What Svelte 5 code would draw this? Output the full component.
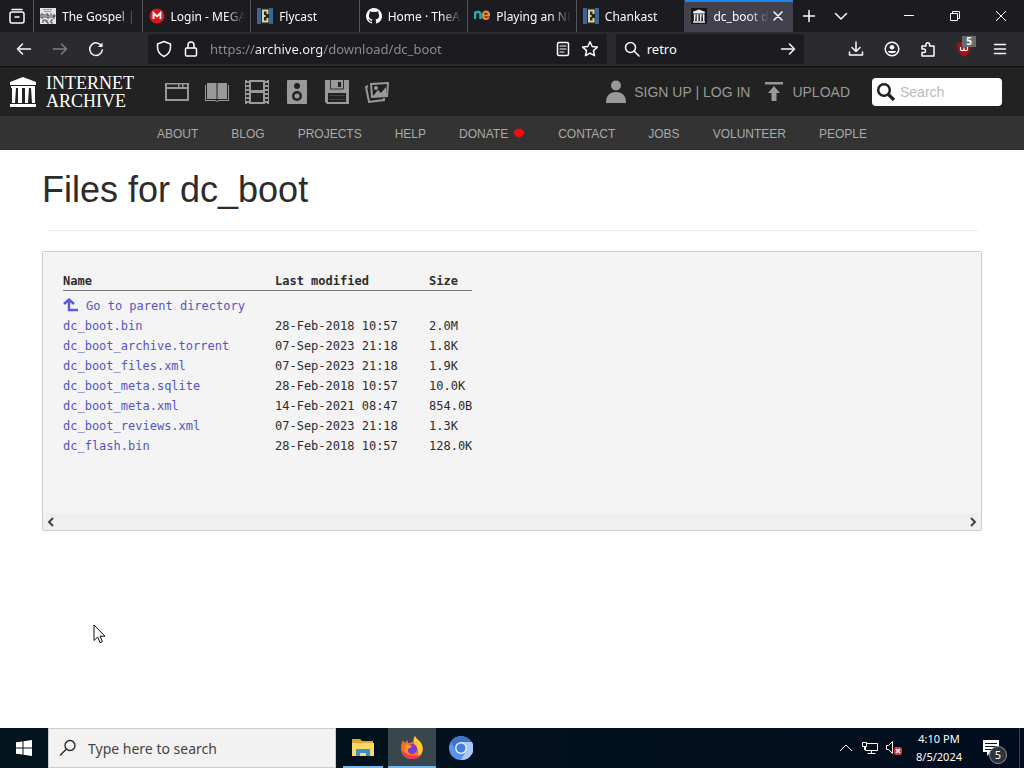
<script lang="ts">
	type Tab = { title: string; icon: string; active?: boolean };
	type Entry = { name: string; modified: string; size: string };

	const tabs: Tab[] = [
		{ title: 'The Gospel | Bible', icon: 'bible' },
		{ title: 'Login - MEGA', icon: 'mega' },
		{ title: 'Flycast', icon: 'emu' },
		{ title: 'Home · TheArchive', icon: 'github' },
		{ title: 'Playing an NES', icon: 'ne' },
		{ title: 'Chankast', icon: 'emu' },
		{ title: 'dc_boot directory', icon: 'archive', active: true }
	];

	const media = ['web', 'texts', 'video', 'audio', 'software', 'images'];

	const links = [
		'About',
		'Blog',
		'Projects',
		'Help',
		'Donate',
		'Contact',
		'Jobs',
		'Volunteer',
		'People'
	];

	const files: Entry[] = [
		{ name: 'dc_boot.bin', modified: '28-Feb-2018 10:57', size: '2.0M' },
		{ name: 'dc_boot_archive.torrent', modified: '07-Sep-2023 21:18', size: '1.8K' },
		{ name: 'dc_boot_files.xml', modified: '07-Sep-2023 21:18', size: '1.9K' },
		{ name: 'dc_boot_meta.sqlite', modified: '28-Feb-2018 10:57', size: '10.0K' },
		{ name: 'dc_boot_meta.xml', modified: '14-Feb-2021 08:47', size: '854.0B' },
		{ name: 'dc_boot_reviews.xml', modified: '07-Sep-2023 21:18', size: '1.3K' },
		{ name: 'dc_flash.bin', modified: '28-Feb-2018 10:57', size: '128.0K' }
	];

	let url = $state('https://archive.org/download/dc_boot');
	let engineQuery = $state('retro');
	let archiveQuery = $state('');
	let taskQuery = $state('');
</script>

{#snippet temple()}
	<path d="M1 6 14 1l13 5v3H1zM2 10h24v2H2z" />
	<path d="M3 12h4l-1 15H3zM9 12h4v15H9zM16 12h4l-1 15h-3zM22 12h4v15h-3zM1 28h26v3H1z" />
{/snippet}

{#snippet favicon(name: string)}
	<svg width="16" height="16" viewBox="0 0 16 16" aria-hidden="true">
		{#if name === 'bible'}
			<rect width="16" height="16" fill="#e4e4e4" />
			<path d="M3 1.500h9M4 3.500h7" stroke="#999" />
			<path
				d="M1 6v4M1 6h2v4H1M5 6v4M7 5v5h2V7H7M11 5v5M13 10V7h2v1.500h-2M13 10h2"
				fill="none"
				stroke="#444"
			/>
			<path d="M3 12v3M3 12h3v2M7 12v3h2M11 12h2M11 12v3h2" fill="none" stroke="#444" />
		{:else if name === 'mega'}
			<circle cx="8" cy="8" r="7.500" fill="#d9161d" />
			<path d="M4.500 11V5L8 8.500 11.500 5v6" fill="none" stroke="#fff" stroke-width="1.800" />
		{:else if name === 'emu'}
			<rect width="16" height="16" fill="#3a6596" />
			<rect x="4" width="8" height="16" fill="#23292f" />
			<path
				d="M10.500 6V2.500H6v11h4.500V10M6 8h2.500"
				fill="none"
				stroke="#dcd29a"
				stroke-width="2"
			/>
		{:else if name === 'github'}
			<path
				fill="#fff"
				d="M8 0a8 8 0 0 0-2.530 15.590c.4.070.550-.170.550-.380v-1.490C3.780 14.210 3.310 12.650 3.310 12.650c-.360-.930-.890-1.170-.890-1.170-.730-.500.060-.490.060-.490.800.060 1.230.830 1.230.830.710 1.220 1.870.870 2.330.660.070-.520.280-.870.510-1.070-1.780-.200-3.640-.890-3.640-3.960 0-.870.310-1.590.820-2.150-.080-.200-.360-1.020.080-2.120 0 0 .670-.220 2.200.820a7.600 7.600 0 0 1 4 0c1.530-1.040 2.200-.820 2.200-.820.440 1.100.160 1.920.080 2.120.510.560.820 1.270.820 2.150 0 3.070-1.870 3.750-3.650 3.950.290.250.540.730.540 1.480v2.330c0 .210.150.460.550.380A8 8 0 0 0 8 0z"
			/>
		{:else if name === 'ne'}
			<path
				d="M1 11V3.500M1 6.500C1.500 3 6.500 3 6.500 6.500V11"
				fill="none"
				stroke="#19b5b0"
				stroke-width="2.400"
			/>
			<path
				d="M9.500 7.500h5.500C15 2.500 9 2.500 9 7.200 9 11.800 13 11.500 15 9.500"
				fill="none"
				stroke="#f0863a"
				stroke-width="2.200"
			/>
		{:else}
			<rect width="16" height="16" fill="#15151a" />
			<g fill="#eee" transform="translate(1.500 1) scale(0.460 0.440)">{@render temple()}</g>
		{/if}
	</svg>
{/snippet}

{#snippet mediaIcon(name: string)}
	<svg width="24" height="24" viewBox="0 0 24 24" fill="#999" aria-hidden="true">
		{#if name === 'web'}
			<path
				fill-rule="evenodd"
				d="M0 3h24v18H0zM2 4.500V7h11V4.500zM14.500 4.500V7H17V4.500zM18.500 4.500V7H22V4.500zM2 9v10h20V9z"
			/>
		{:else if name === 'texts'}
			<path d="M2 3h9.500v16H2zM22 3h-9.500v16H22z" />
			<path d="M0 5h1v15h9l2 1 2-1h9V5h1v16H14l-2 1-2-1H0z" />
		{:else if name === 'video'}
			<path
				fill-rule="evenodd"
				d="M0 0h2v1h2V0h16v1h2V0h2v24h-2v-1h-2v1H4v-1H2v1H0zM6 2v8h12V2zM6 13v9h12v-9zM1 3v2h3V3zM1 7v2h3V7zM1 11v2h3v-2zM1 15v2h3v-2zM1 19v2h3v-2zM20 3v2h3V3zM20 7v2h3V7zM20 11v2h3v-2zM20 15v2h3v-2zM20 19v2h3v-2z"
			/>
		{:else if name === 'audio'}
			<rect x="2" width="20" height="24" rx="1" />
			<circle cx="12" cy="6" r="3" fill="#222" />
			<circle cx="12" cy="16" r="5" fill="#222" />
			<circle cx="12" cy="16" r="2.500" />
		{:else if name === 'software'}
			<path fill-rule="evenodd" d="M0 0h24v24H2l-2-2zM3 13v9h18v-9z" />
			<path d="M5.500 0v9h13V0" fill="none" stroke="#333" />
			<path d="M13 2h3v5h-3z" fill="#222" />
			<path d="M4 15h16v1H4zM4 19h16v1H4z" fill="#444" />
		{:else}
			<path d="M3 6 1 7l3 15 15-2v-2" fill="none" stroke="#999" stroke-width="2" />
			<path fill-rule="evenodd" d="M5 3l19-1-1 15-17 1zM7 5l1 11 13-1 1-11z" />
			<path d="M8 16l5-6 3 3 5-6v9z" />
			<circle cx="11" cy="8" r="2" />
		{/if}
	</svg>
{/snippet}

<div class="desktop">
	<header class="browser">
		<div class="tab-strip">
			<button class="view" aria-label="Recent browsing">
				<svg width="18" height="18" viewBox="0 0 18 18" class="line" aria-hidden="true">
					<rect x="2" y="5" width="14" height="11" rx="2" />
					<path d="M4 2.500h10M7 10h4" />
				</svg>
			</button>
			<nav class="tabs" aria-label="Tabs">
				{#each tabs as tab}
					<div class="tab" class:active={tab.active}>
						<button class="tab-title">
							{@render favicon(tab.icon)}
							<span>{tab.title}</span>
						</button>
						{#if tab.active}
							<button class="close" aria-label="Close tab">
								<svg width="10" height="10" viewBox="0 0 10 10" class="line" aria-hidden="true">
									<path d="M1 1l8 8M9 1 1 9" />
								</svg>
							</button>
						{/if}
					</div>
				{/each}
			</nav>
			<div class="strip-tools">
				<button aria-label="New tab">
					<svg width="14" height="14" viewBox="0 0 14 14" class="line" aria-hidden="true">
						<path d="M7 1.500v11M1.500 7h11" />
					</svg>
				</button>
				<button aria-label="List all tabs">
					<svg width="14" height="14" viewBox="0 0 14 14" class="line" aria-hidden="true">
						<path d="M1.500 4.500 7 10l5.500-5.500" />
					</svg>
				</button>
			</div>
			<div class="window-tools">
				<button aria-label="Minimize">
					<svg width="10" height="10" viewBox="0 0 10 10" class="thin" aria-hidden="true">
						<path d="M0 4.500h10" />
					</svg>
				</button>
				<button aria-label="Restore">
					<svg width="10" height="10" viewBox="0 0 10 10" class="thin" aria-hidden="true">
						<path d="M.5 2.500h7v7h-7zM2.500 2.500v-2h7v7h-2" />
					</svg>
				</button>
				<button aria-label="Close window">
					<svg width="12" height="12" viewBox="0 0 12 12" class="thin" aria-hidden="true">
						<path d="M1 1l10 10M11 1 1 11" />
					</svg>
				</button>
			</div>
		</div>

		<div class="toolbar">
			<div class="tools">
				<button aria-label="Back">
					<svg width="16" height="16" viewBox="0 0 16 16" class="line" aria-hidden="true">
						<path d="M14.500 8H1.500M6.500 3l-5 5 5 5" />
					</svg>
				</button>
				<button aria-label="Forward" disabled>
					<svg width="16" height="16" viewBox="0 0 16 16" class="line" aria-hidden="true">
						<path d="M1.500 8h13M9.500 3l5 5-5 5" />
					</svg>
				</button>
				<button aria-label="Reload">
					<svg width="16" height="16" viewBox="0 0 16 16" class="line" aria-hidden="true">
						<path d="M13.500 5A6.300 6.300 0 1 0 14.300 9" />
						<path d="M14.500 1.500V6H10z" fill="#fbfbfe" stroke="none" />
					</svg>
				</button>
			</div>
			<div class="field url">
				<svg width="16" height="18" viewBox="0 0 16 18" class="line" aria-hidden="true">
					<path d="M8 1.500 14.500 4v3c0 4-2 7.500-6.500 9.500C3.500 14.500 1.500 11 1.500 7V4z" />
				</svg>
				<svg width="16" height="18" viewBox="0 0 16 18" class="line" aria-hidden="true">
					<rect x="2.500" y="8" width="11" height="8" rx="1" />
					<path d="M5 8V5a3 3 0 0 1 6 0v3" />
				</svg>
				<input type="text" aria-label="Address" bind:value={url} />
				<button aria-label="Reader view">
					<svg width="14" height="16" viewBox="0 0 14 16" class="line" aria-hidden="true">
						<rect x="1.500" y="1.500" width="11" height="13" rx="1.500" />
						<path d="M4 5h6M4 8h6M4 11h4" stroke-width="1.200" />
					</svg>
				</button>
				<button aria-label="Bookmark this page">
					<svg width="18" height="18" viewBox="0 0 18 18" class="line" aria-hidden="true">
						<path
							d="M9 1.800l2.200 4.700 5.100.6-3.800 3.500 1 5.100L9 13.200l-4.500 2.500 1-5.100L1.700 7.100l5.100-.6z"
						/>
					</svg>
				</button>
			</div>
			<div class="field engine">
				<svg width="16" height="16" viewBox="0 0 16 16" class="line" aria-hidden="true">
					<circle cx="6.500" cy="6.500" r="5" />
					<path d="M10 10l5 5" />
				</svg>
				<input type="text" aria-label="Search the web" bind:value={engineQuery} />
				<button aria-label="Go">
					<svg width="16" height="16" viewBox="0 0 16 16" class="line" aria-hidden="true">
						<path d="M1.500 8h13M9.500 3l5 5-5 5" />
					</svg>
				</button>
			</div>
			<div class="tools">
				<button aria-label="Downloads">
					<svg width="16" height="16" viewBox="0 0 16 16" class="line" aria-hidden="true">
						<path d="M8 1v9M4 6.500 8 10.500l4-4M1.500 11v3h13v-3" />
					</svg>
				</button>
				<button aria-label="Account">
					<svg width="16" height="16" viewBox="0 0 16 16" class="line" aria-hidden="true">
						<circle cx="8" cy="8" r="6.800" />
						<circle cx="8" cy="6.300" r="2.300" fill="#fbfbfe" stroke="none" />
						<path d="M3.800 10h8.400c-.8 3-7.600 3-8.400 0z" fill="#fbfbfe" stroke="none" />
					</svg>
				</button>
				<button aria-label="Extensions">
					<svg width="16" height="16" viewBox="0 0 16 16" class="line" aria-hidden="true">
						<path
							d="M2 5h4V3.500a1.800 1.800 0 0 1 3.600 0V5H14v10H2v-3.500h1.800a1.700 1.700 0 0 0 0-3.500H2z"
						/>
					</svg>
				</button>
				<button class="blocker" aria-label="Content blocker">
					<svg width="16" height="16" viewBox="0 0 16 16" aria-hidden="true">
						<path d="M8 0c2 1.500 4 1.800 7 2 0 7-2 11-7 14C3 13 1 9 1 2c3-.2 5-.5 7-2z" fill="#a50f16" />
						<path
							d="M4.500 6v2a1.700 1.700 0 0 0 3.500 0V6.500M8 8a1.700 1.700 0 0 0 3.500 0V6"
							fill="none"
							stroke="#fff"
							stroke-width="1.200"
						/>
					</svg>
					<span class="count">5</span>
				</button>
				<button aria-label="Menu">
					<svg width="14" height="14" viewBox="0 0 14 14" class="line" aria-hidden="true">
						<path d="M1.500 2.500h11M1.500 7h11M1.500 11.500h11" />
					</svg>
				</button>
			</div>
		</div>
	</header>

	<div class="page">
		<div class="topbar">
			<a class="brand" href="#home">
				<svg width="28" height="32" viewBox="0 0 28 32" fill="#fff" aria-hidden="true">
					{@render temple()}
				</svg>
				<span>INTERNET<br />ARCHIVE</span>
			</a>
			<nav class="media" aria-label="Media types">
				{#each media as item}
					<a href="#{item}" aria-label={item}>{@render mediaIcon(item)}</a>
				{/each}
			</nav>
			<a class="account" href="#login">
				<svg width="20" height="24" viewBox="0 0 20 24" fill="#999" aria-hidden="true">
					<circle cx="10" cy="5.500" r="5" />
					<path d="M0 23c0-7 3-11 10-11s10 4 10 11z" />
				</svg>
				SIGN UP | LOG IN
			</a>
			<a class="upload" href="#upload">
				<svg width="20" height="20" viewBox="0 0 20 20" fill="#999" aria-hidden="true">
					<path d="M1 0h18v2.500H1zM10 4l6 7h-3.500v8h-5v-8H4z" />
				</svg>
				UPLOAD
			</a>
			<label class="site-search">
				<svg width="20" height="20" viewBox="0 0 20 20" aria-hidden="true">
					<circle cx="8" cy="8" r="5.800" fill="none" stroke="#222" stroke-width="2.500" />
					<path d="M12 12l6 6" stroke="#222" stroke-width="3.200" />
				</svg>
				<input type="text" placeholder="Search" aria-label="Search" bind:value={archiveQuery} />
			</label>
		</div>
		<nav class="links" aria-label="Site">
			{#each links as link}
				<a href="#{link.toLowerCase()}">
					{link.toUpperCase()}
					{#if link === 'Donate'}
						<svg width="12" height="12" viewBox="0 0 12 12" aria-hidden="true">
							<path
								d="M6 9.500C3 9 1 7 1 4.500 1 1.500 4.500 0 6 1 7.500 0 11 1.500 11 4.500 11 7 9 9 6 9.500z"
								fill="#f00c0c"
							/>
						</svg>
					{/if}
				</a>
			{/each}
		</nav>

		<main>
			<h1>Files for dc_boot</h1>
			<hr />
			<div class="listing">
				<table>
					<thead>
						<tr>
							<th class="name">Name</th>
							<th class="modified">Last modified</th>
							<th>Size</th>
						</tr>
					</thead>
					<tbody>
						<tr>
							<td colspan="3">
								<a class="parent" href="#parent">
									<svg width="16" height="16" viewBox="0 0 16 16" aria-hidden="true">
										<path
											d="M1 6l5-4.500L11 6M6 2v10h9"
											fill="none"
											stroke="#5a5ae0"
											stroke-width="2.400"
										/>
									</svg>
									Go to parent directory
								</a>
							</td>
						</tr>
						{#each files as file}
							<tr>
								<td><a href="#{file.name}">{file.name}</a></td>
								<td>{file.modified}</td>
								<td>{file.size}</td>
							</tr>
						{/each}
					</tbody>
				</table>
				<div class="scrollbar">
					<button aria-label="Scroll left">
						<svg width="8" height="10" viewBox="0 0 8 10" aria-hidden="true">
							<path d="M6 1 2 5l4 4" fill="none" stroke="#444" stroke-width="2" />
						</svg>
					</button>
					<button aria-label="Scroll right">
						<svg width="8" height="10" viewBox="0 0 8 10" aria-hidden="true">
							<path d="M2 1l4 4-4 4" fill="none" stroke="#444" stroke-width="2" />
						</svg>
					</button>
				</div>
			</div>
		</main>
	</div>

	<footer class="taskbar">
		<button class="start" aria-label="Start">
			<svg width="16" height="16" viewBox="0 0 16 16" fill="#fff" aria-hidden="true">
				<path d="M0 2.300 6.500 1.400v6.100H0zM7.500 1.200 16 0v7.500H7.500zM0 8.500h6.500v6.100L0 13.700zM7.500 8.500H16V16l-8.500-1.200z" />
			</svg>
		</button>
		<label class="task-search">
			<svg width="18" height="18" viewBox="0 0 18 18" aria-hidden="true">
				<circle cx="11" cy="6.500" r="5" fill="none" stroke="#222" stroke-width="1.300" />
				<path d="M7.500 10 1 16.500" stroke="#222" stroke-width="1.300" />
			</svg>
			<input
				type="text"
				placeholder="Type here to search"
				aria-label="Type here to search"
				bind:value={taskQuery}
			/>
		</label>
		<div class="apps">
			<button class="open" aria-label="File Explorer">
				<svg width="22" height="20" viewBox="0 0 22 20" aria-hidden="true">
					<path d="M0 1h8l2 2h11v5H0z" fill="#e0a92e" />
					<path d="M0 5h22v13H0z" fill="#fbd867" />
					<path d="M4 18v-6q0-1 1-1h12q1 0 1 1v6h-4v-3H8v3z" fill="#3f8fc6" />
				</svg>
			</button>
			<button class="open current" aria-label="Firefox">
				<svg width="24" height="24" viewBox="0 0 24 24" aria-hidden="true">
					<path
						d="M12 23C5 23 1 18 1 12c0-4 1-6 2-8l1.500 3L8 4v3l5-1c0-2 .5-4 2-6 1 3 4 4 6 7 5 8-.5 16-9 16z"
						fill="#ff6a2b"
					/>
					<path d="M15 0c1 3 4 4 6 7 4 7 0 13-5 15 3-4 3-9 0-12-2-2-3-6-1-10z" fill="#ffcd3a" />
					<path d="M1.500 14C3 20 8 23 13 23c4 0 7-2 9-5-5 3-15 3-20.500-4z" fill="#f43158" />
					<circle cx="12" cy="13" r="5" fill="#7b3bd1" />
					<path d="M5 9c3-1 5 0 7 1-1 2-3 2-4 3-1 2 0 4 2 5-5 0-7-4-5-9z" fill="#ff9626" />
				</svg>
			</button>
			<button aria-label="Chromium">
				<svg width="24" height="24" viewBox="0 0 24 24" aria-hidden="true">
					<circle cx="12" cy="12" r="12" fill="#5b94ee" />
					<path d="M12 6h11A12 12 0 0 1 12 24l5-9z" fill="#a9c9fa" />
					<path d="M2 6a12 12 0 0 1 20.400 0H12l-5 9z" fill="#3b74cd" />
					<circle cx="12" cy="12" r="6" fill="#e9f1fe" />
					<circle cx="12" cy="12" r="4.500" fill="#3f7de0" />
				</svg>
			</button>
		</div>
		<div class="tray">
			<button aria-label="Show hidden icons">
				<svg width="12" height="8" viewBox="0 0 12 8" class="thin" aria-hidden="true">
					<path d="M0 7l6-6 6 6" />
				</svg>
			</button>
			<button aria-label="Network">
				<svg width="18" height="14" viewBox="0 0 18 14" class="thin" aria-hidden="true">
					<path d="M6 2.500h10.500v7H4.500V6M10.500 9.500v3M6.500 12.500h8M1.500 1.500h4v4h-4zM3.500 5v4" />
				</svg>
			</button>
			<button aria-label="Volume muted">
				<svg width="18" height="14" viewBox="0 0 18 14" class="thin" aria-hidden="true">
					<path d="M1.500 4.500h2l4-4v12l-4-4h-2z" />
					<rect x="9" y="6" width="8" height="8" rx="2" fill="#d9323a" stroke="none" />
					<path d="M11 8l4 4M15 8l-4 4" stroke-width="1.500" />
				</svg>
			</button>
		</div>
		<time class="clock">4:10 PM<br />8/5/2024</time>
		<button class="notices" aria-label="Notifications">
			<svg width="16" height="16" viewBox="0 0 16 16" aria-hidden="true">
				<path d="M0 0h16v12H8l-4 4v-4H0z" fill="#fff" />
				<path d="M2 3.500h12M2 6.500h12M2 9.500h8" stroke="#06111f" />
			</svg>
			<span class="notice-count">5</span>
		</button>
	</footer>

	<svg class="pointer" width="13" height="20" viewBox="0 0 13 20" aria-hidden="true">
		<path
			d="M1 1v15.500l3.600-3.500 2.400 5.700 2.400-1L7 12.200h5z"
			fill="#fff"
			stroke="#111"
		/>
	</svg>
</div>

<style>
	:global(body) {
		background: #fff;
		font-family: 'Liberation Sans', Arial, sans-serif;
	}

	button,
	input {
		border: 0;
		padding: 0;
		background: none;
		color: inherit;
		font: inherit;
	}

	button {
		display: inline-flex;
		align-items: center;
		justify-content: center;
	}

	input {
		width: 0;
		min-width: 0;
		flex: 1;
		outline: 0;
	}

	a {
		text-decoration: none;
	}

	svg {
		display: block;
		flex: none;
	}

	.line {
		fill: none;
		stroke: #fbfbfe;
		stroke-width: 1.5;
		stroke-linecap: round;
		stroke-linejoin: round;
	}

	.thin {
		fill: none;
		stroke: #fff;
		stroke-width: 1;
	}

	.desktop {
		position: relative;
		display: flex;
		flex-direction: column;
		min-height: 100vh;
	}

	/* Browser chrome */
	.browser {
		background: #2b2a2f;
		border-bottom: 1px solid #0c0c0d;
		color: #fbfbfe;
		font-family: 'Noto Sans', 'Open Sans', sans-serif;
		font-size: 12px;
	}

	.tab-strip {
		display: flex;
		height: 32px;
		background: #1c1b20;
	}

	.view {
		width: 33px;
	}

	.tabs {
		display: grid;
		grid-template-columns: repeat(7, 1fr);
		flex: 1;
		min-width: 0;
	}

	.tab {
		display: flex;
		align-items: center;
		gap: 3px;
		min-width: 0;
		padding: 0 5px 0 6px;
		border-left: 1px solid #55545c;
	}

	.tab.active {
		padding-right: 9px;
		background: #42414d;
		border-left-color: #42414d;
		box-shadow: inset 0 2px #1d86e8;
	}

	.tab-title {
		flex: 1;
		justify-content: flex-start;
		gap: 6px;
		min-width: 0;
		height: 100%;
	}

	.tab-title span {
		flex: 1;
		min-width: 0;
		overflow: hidden;
		text-align: left;
		white-space: nowrap;
		mask-image: linear-gradient(to left, transparent, #000 20px);
	}

	.close {
		width: 12px;
		height: 16px;
	}

	.strip-tools {
		display: flex;
		margin-right: 29px;
	}

	.strip-tools button {
		width: 32px;
	}

	.window-tools {
		display: flex;
	}

	.window-tools button {
		width: 46px;
	}

	.toolbar {
		display: flex;
		align-items: center;
		height: 34px;
		padding: 0 6px;
		font-size: 13px;
	}

	.tools {
		display: flex;
	}

	.tools button {
		width: 36px;
		height: 32px;
	}

	.tools button:disabled {
		opacity: 0.4;
	}

	.field {
		display: flex;
		align-items: center;
		box-sizing: border-box;
		min-width: 0;
		height: 30px;
		padding: 0 8px;
		border-radius: 2px;
		background: #1c1b20;
	}

	.url {
		flex: 442;
		gap: 11px;
		margin-left: 34px;
	}

	/* Host name stays bright while scheme and path are dimmed */
	.url input {
		color: #8f8e96;
		background: linear-gradient(to right, #8f8e96 45px, #fbfbfe 45px 112px, #8f8e96 112px);
		background-clip: text;
		-webkit-text-fill-color: transparent;
	}

	.engine {
		flex: 172;
		gap: 7px;
		margin: 0 34px 0 9px;
	}

	.blocker {
		position: relative;
	}

	.count {
		position: absolute;
		top: 3px;
		right: 6px;
		padding: 0 4px;
		background: #6b6b6b;
		font-size: 10px;
		font-weight: 700;
		line-height: 11px;
	}

	/* Site header */
	.page {
		flex: 1;
	}

	.topbar {
		display: flex;
		align-items: center;
		height: 49px;
		padding: 0 22px 0 9px;
		background: #222;
		color: #999;
		font-size: 14px;
	}

	.topbar a {
		color: inherit;
	}

	.topbar .brand {
		display: flex;
		align-items: center;
		gap: 9px;
		width: 156px;
		color: #fff;
		font-family: 'Liberation Serif', 'Times New Roman', serif;
		font-size: 18px;
		line-height: 18px;
	}

	.media {
		display: flex;
		gap: 16px;
	}

	.account,
	.upload {
		display: flex;
		align-items: center;
		gap: 8px;
	}

	.account {
		margin-left: auto;
	}

	.upload {
		margin: 0 22px 0 14px;
	}

	.site-search {
		display: flex;
		align-items: center;
		gap: 4px;
		width: 126px;
		height: 28px;
		padding-left: 4px;
		border-radius: 4px;
		background: #fff;
		color: #222;
	}

	.site-search input::placeholder {
		color: #bbb;
	}

	.links {
		display: flex;
		justify-content: center;
		gap: 33px;
		padding-top: 2px;
		background: #333;
		line-height: 32px;
	}

	.links a {
		display: flex;
		align-items: center;
		gap: 5px;
		color: #aaa;
		font-size: 12px;
	}

	/* File listing */
	main {
		padding: 20px 42px;
	}

	h1 {
		margin: 0 0 20px;
		color: #2c2c2c;
		font-size: 36px;
		font-weight: 400;
		line-height: 40px;
	}

	hr {
		margin: 0 4px 20px 6px;
		border: 0;
		border-top: 1px solid #eee;
	}

	.listing {
		border: 1px solid #ccc;
		border-radius: 2px;
		background: #f4f4f4;
		color: #2c2c2c;
		font-family: 'DejaVu Sans Mono', 'Liberation Mono', monospace;
		font-size: 12px;
		line-height: 20px;
	}

	table {
		margin: 20px 20px 57px;
		border-collapse: collapse;
	}

	th,
	td {
		padding: 0;
		text-align: left;
		white-space: nowrap;
	}

	th {
		border-bottom: 1px solid #777;
		line-height: 18px;
	}

	th.name {
		width: 212px;
	}

	th.modified {
		width: 154px;
	}

	tbody tr:first-child td {
		padding-top: 5px;
	}

	.listing a {
		color: #5454c8;
	}

	.parent {
		display: flex;
		align-items: center;
		gap: 7px;
	}

	.scrollbar {
		display: flex;
		justify-content: space-between;
		height: 17px;
		padding: 0 4px;
		background: #efefef;
	}

	/* Taskbar */
	.taskbar {
		display: flex;
		height: 40px;
		background: linear-gradient(to right, #03151d, #010d1e);
		color: #fff;
		font-family: 'Noto Sans', 'Open Sans', sans-serif;
	}

	.start {
		width: 48px;
	}

	.task-search {
		display: flex;
		align-items: center;
		gap: 11px;
		box-sizing: border-box;
		width: 288px;
		padding: 0 10px;
		border: 1px solid #c9cdd0;
		background: #f2f2f2;
		font-size: 14px;
	}

	.task-search input::placeholder {
		color: #444;
	}

	.apps {
		display: flex;
		gap: 1px;
		margin-left: 3px;
	}

	.apps button {
		width: 48px;
	}

	.apps .open {
		background: linear-gradient(#76b9ed, #76b9ed) bottom / 40px 2px no-repeat;
	}

	.apps .current {
		background: linear-gradient(#76b9ed, #76b9ed) bottom / 100% 2px no-repeat #38464d;
	}

	.tray {
		display: flex;
		margin-left: auto;
	}

	.tray button {
		width: 24px;
	}

	.clock {
		width: 66px;
		padding-top: 2px;
		font-size: 11px;
		line-height: 18px;
		text-align: center;
	}

	.notices {
		position: relative;
		width: 48px;
		margin-right: 4px;
		border-right: 1px solid #3c4650;
		padding-right: 10px;
	}

	.notice-count {
		position: absolute;
		right: 12px;
		bottom: 4px;
		width: 16px;
		border: 1px solid #8a9299;
		border-radius: 50%;
		background: #2c353d;
		font-size: 11px;
		line-height: 16px;
	}

	.pointer {
		position: absolute;
		top: 624px;
		left: 93px;
	}
</style>
